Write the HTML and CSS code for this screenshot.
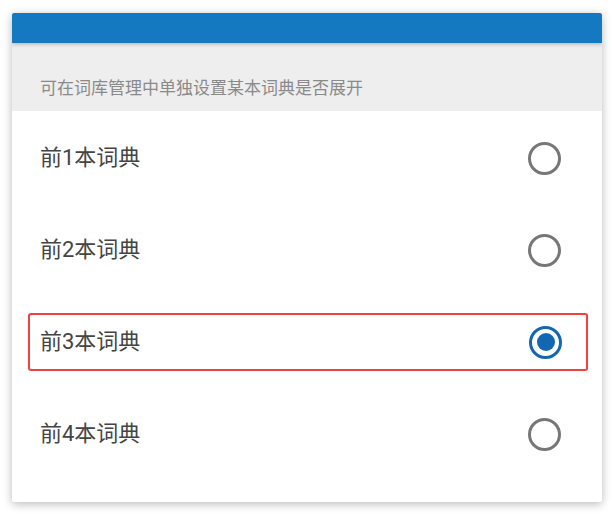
FILE: index.html
```html
<!DOCTYPE html>
<html lang="zh-CN">
<head>
<meta charset="utf-8">
<link rel="stylesheet" href="styles.css">
</head>
<body>
<div class="dialog">
  <div class="titlebar"></div>
  <div class="hint">可在词库管理中单独设置某本词典是否展开</div>
  <ul class="options">
    <li class="option"><span class="label">前1本词典</span><span class="radio"></span></li>
    <li class="option"><span class="label">前2本词典</span><span class="radio"></span></li>
    <li class="option highlighted"><span class="label">前3本词典</span><span class="radio checked"></span></li>
    <li class="option"><span class="label">前4本词典</span><span class="radio"></span></li>
  </ul>
</div>
</body>
</html>
```

FILE: styles.css
```css
html, body {
  margin: 0;
  padding: 0;
  background: #ffffff;
}
body {
  padding: 13px 12px 12px 12px;
  font-family: Roboto, "Noto Sans CJK SC", sans-serif;
}
.dialog {
  width: 590px;
  height: 489px;
  background: #ffffff;
  border-radius: 2px;
  box-shadow: 0 2px 10px rgba(0,0,0,0.28);
  overflow: hidden;
  display: flex;
  flex-direction: column;
}
.titlebar {
  height: 30px;
  background: #1479c0;
  box-shadow: 0 2px 3px rgba(0,0,0,0.18);
  position: relative;
  z-index: 1;
  flex: none;
}
.hint {
  height: 68px;
  background: #eeeeee;
  box-sizing: border-box;
  padding: 34px 0 0 28px;
  font-size: 17px;
  line-height: 22px;
  color: #8a8a8a;
  flex: none;
}
.options {
  list-style: none;
  margin: 0;
  padding: 1px 0 0 0;
}
.option {
  height: 92px;
  display: flex;
  align-items: center;
  justify-content: space-between;
  padding: 0 41px 0 28px;
  box-sizing: border-box;
}
.highlighted {
  height: 58px;
  margin: 17px 14px 17px 16px;
  padding: 0 24px 0 10px;
  border: 2px solid #f0413d;
  border-radius: 3px;
}
.label {
  font-size: 22px;
  color: #444444;
  line-height: 28px;
}
.radio {
  width: 27px;
  height: 27px;
  border: 3px solid #777777;
  border-radius: 50%;
  position: relative;
  flex: none;
}
.radio.checked {
  border-color: #1167b1;
}
.radio.checked::after {
  content: "";
  position: absolute;
  left: 4.5px;
  top: 4.5px;
  width: 18px;
  height: 18px;
  border-radius: 50%;
  background: #1167b1;
}
```
